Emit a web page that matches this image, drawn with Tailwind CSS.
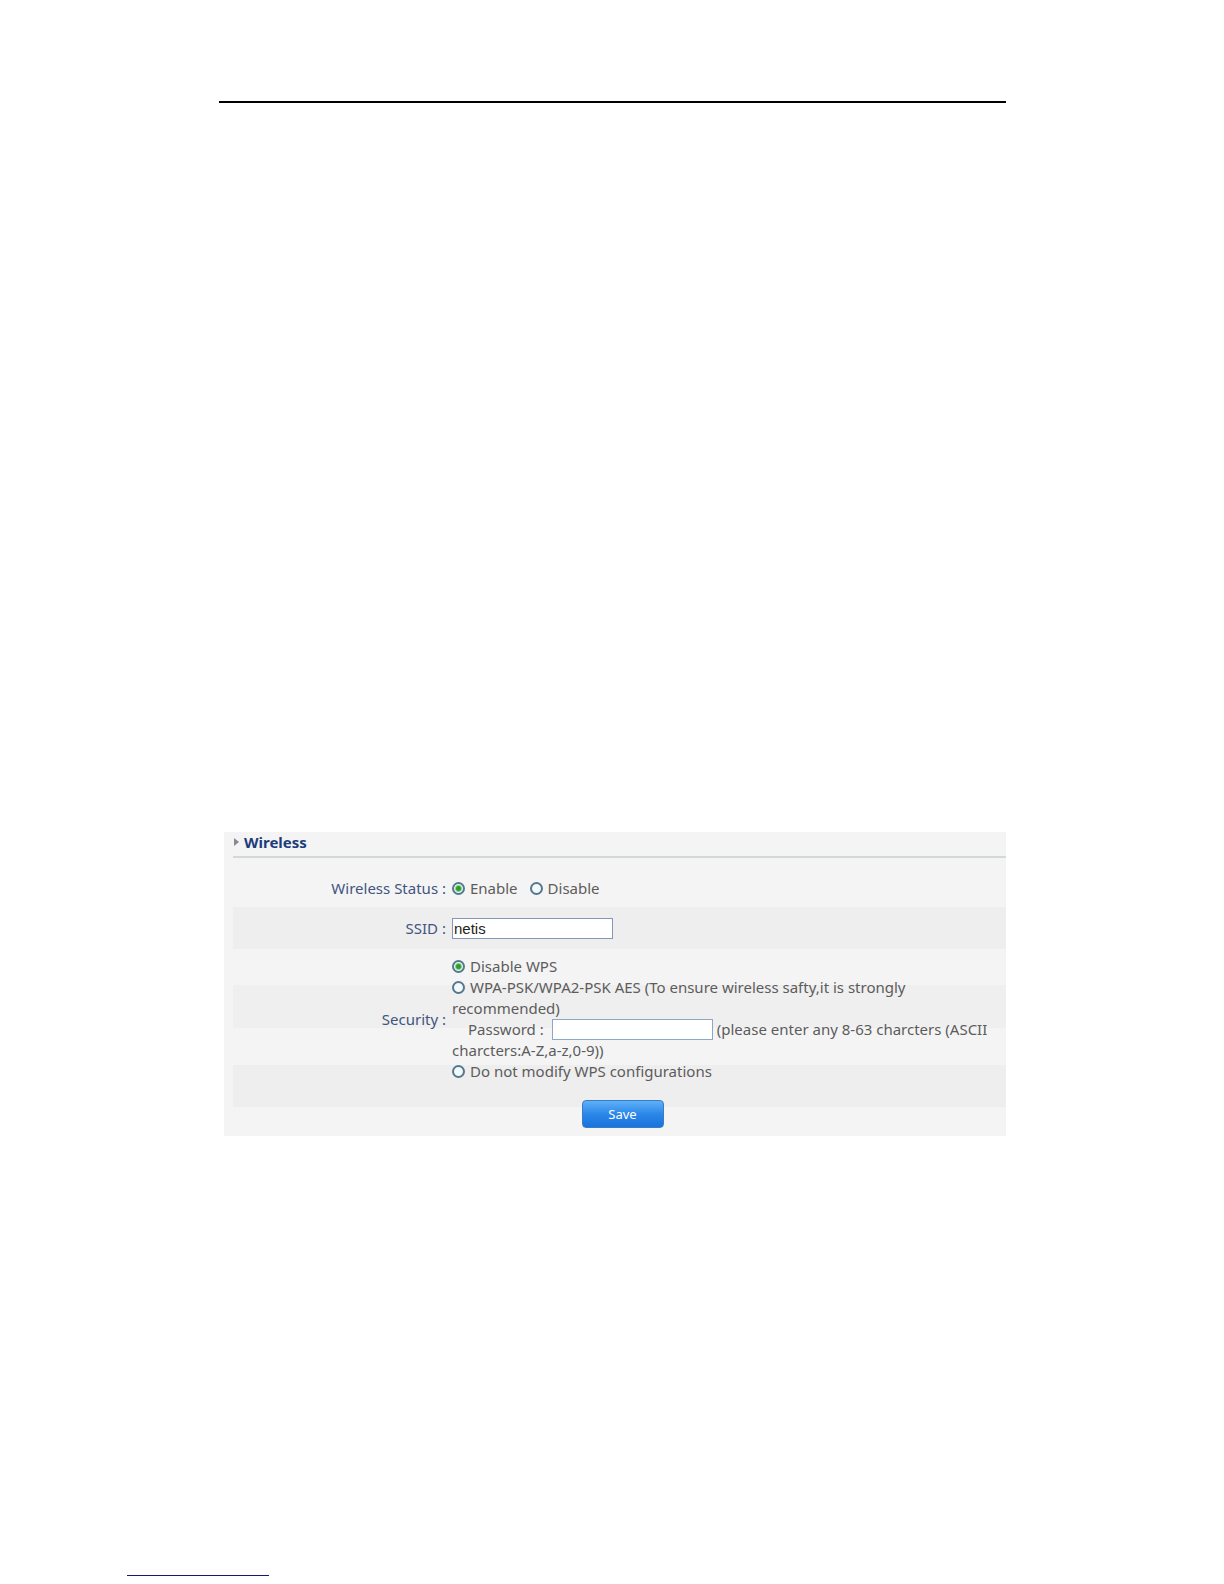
<!DOCTYPE html>
<html lang="en">
<head>
<meta charset="utf-8">
<title>Wireless</title>
<script src="https://cdn.jsdelivr.net/npm/@tailwindcss/browser@4"></script>
</head>
<body class="flex min-h-screen flex-col bg-white font-['Noto_Sans','Open_Sans',sans-serif] text-[15px] leading-[21px] text-[#5c5c5c]">
<header class="mr-[218px] ml-[219px] pt-[101px]"><hr class="border-0 border-t-2 border-black"></header>
<main class="mt-[729px] mr-[218px] ml-56 bg-[#f4f4f4] pl-[9px]">
  <h1 class="flex h-[26px] items-center gap-[5px] border-b-2 border-[#d3d8d9] pb-1 text-[15px] font-bold text-[#1c3c7c]">
    <svg class="h-2 w-1.5" viewBox="0 0 6 8" aria-hidden="true"><path d="M1 0L6 4L1 8Z" fill="#858a92"/></svg>
    Wireless
  </h1>
  <form>
    <div role="radiogroup" aria-labelledby="status" class="grid h-[49px] grid-cols-[213px_1fr] items-center gap-x-1.5 pt-3">
      <span id="status" class="text-right text-[#41557f]">Wireless Status :</span>
      <div class="flex gap-3">
        <label class="flex items-center gap-[5px]"><input type="radio" name="status" checked class="size-[13px] appearance-none rounded-full border-2 border-[#55788f] bg-[#f3f8f8] checked:bg-[radial-gradient(circle,#27a327_0,#27a327_2px,#f3f8f8_4px)]">Enable</label>
        <label class="flex items-center gap-[5px]"><input type="radio" name="status" class="size-[13px] appearance-none rounded-full border-2 border-[#55788f] bg-[#f3f8f8] checked:bg-[radial-gradient(circle,#27a327_0,#27a327_2px,#f3f8f8_4px)]">Disable</label>
      </div>
    </div>
    <div class="grid h-[42px] grid-cols-[213px_1fr] items-center gap-x-1.5 bg-[#eeeeee]">
      <label for="ssid" class="text-right text-[#41557f]">SSID :</label>
      <input id="ssid" type="text" value="netis" class="h-[21px] w-[161px] border border-[#8497b8] bg-white px-px font-['Liberation_Sans',sans-serif] text-[15px] text-[#222222]">
    </div>
    <div role="radiogroup" aria-labelledby="security" class="grid min-h-[158px] grid-cols-[213px_1fr] items-center gap-x-1.5 bg-[linear-gradient(#f4f4f4_36px,#efefef_36px,#efefef_79px,#f4f4f4_79px,#f4f4f4_116px,#eeeeee_116px)] pt-1.5 pb-6">
      <span id="security" class="text-right text-[#41557f]">Security :</span>
      <div>
        <div><label><input type="radio" name="security" checked class="mr-[5px] size-[13px] appearance-none rounded-full border-2 border-[#55788f] bg-[#f3f8f8] align-[-1px] checked:bg-[radial-gradient(circle,#27a327_0,#27a327_2px,#f3f8f8_4px)]">Disable WPS</label></div>
        <div><label class="block"><input type="radio" name="security" class="mr-[5px] size-[13px] appearance-none rounded-full border-2 border-[#55788f] bg-[#f3f8f8] align-[-1px] checked:bg-[radial-gradient(circle,#27a327_0,#27a327_2px,#f3f8f8_4px)]">WPA-PSK/WPA2-PSK AES (To ensure wireless safty,it is strongly recommended)</label></div>
        <div><label for="password" class="mr-2 ml-4 inline-block">Password :</label><input id="password" type="password" class="mr-1 h-[21px] w-[161px] border border-[#8ca8c6] bg-white px-px align-top">(please enter any 8-63 charcters (ASCII charcters:A-Z,a-z,0-9))</div>
        <div><label><input type="radio" name="security" class="mr-[5px] size-[13px] appearance-none rounded-full border-2 border-[#55788f] bg-[#f3f8f8] align-[-1px] checked:bg-[radial-gradient(circle,#27a327_0,#27a327_2px,#f3f8f8_4px)]">Do not modify WPS configurations</label></div>
      </div>
    </div>
    <div class="-mt-[7px] flex justify-center pb-2 pl-1.5">
      <button type="submit" class="h-7 w-[82px] rounded border border-[#3a7cc4] bg-linear-to-b from-[#5eb0f8] via-[#2b87e8] to-[#1b72dc] text-[13px] leading-5 text-white">Save</button>
    </div>
  </form>
</main>
<footer class="mt-auto pb-2 pl-[127px]"><a href="#" aria-label="Website" class="block w-[142px] border-b border-[#18187c]"></a></footer>
</body>
</html>
